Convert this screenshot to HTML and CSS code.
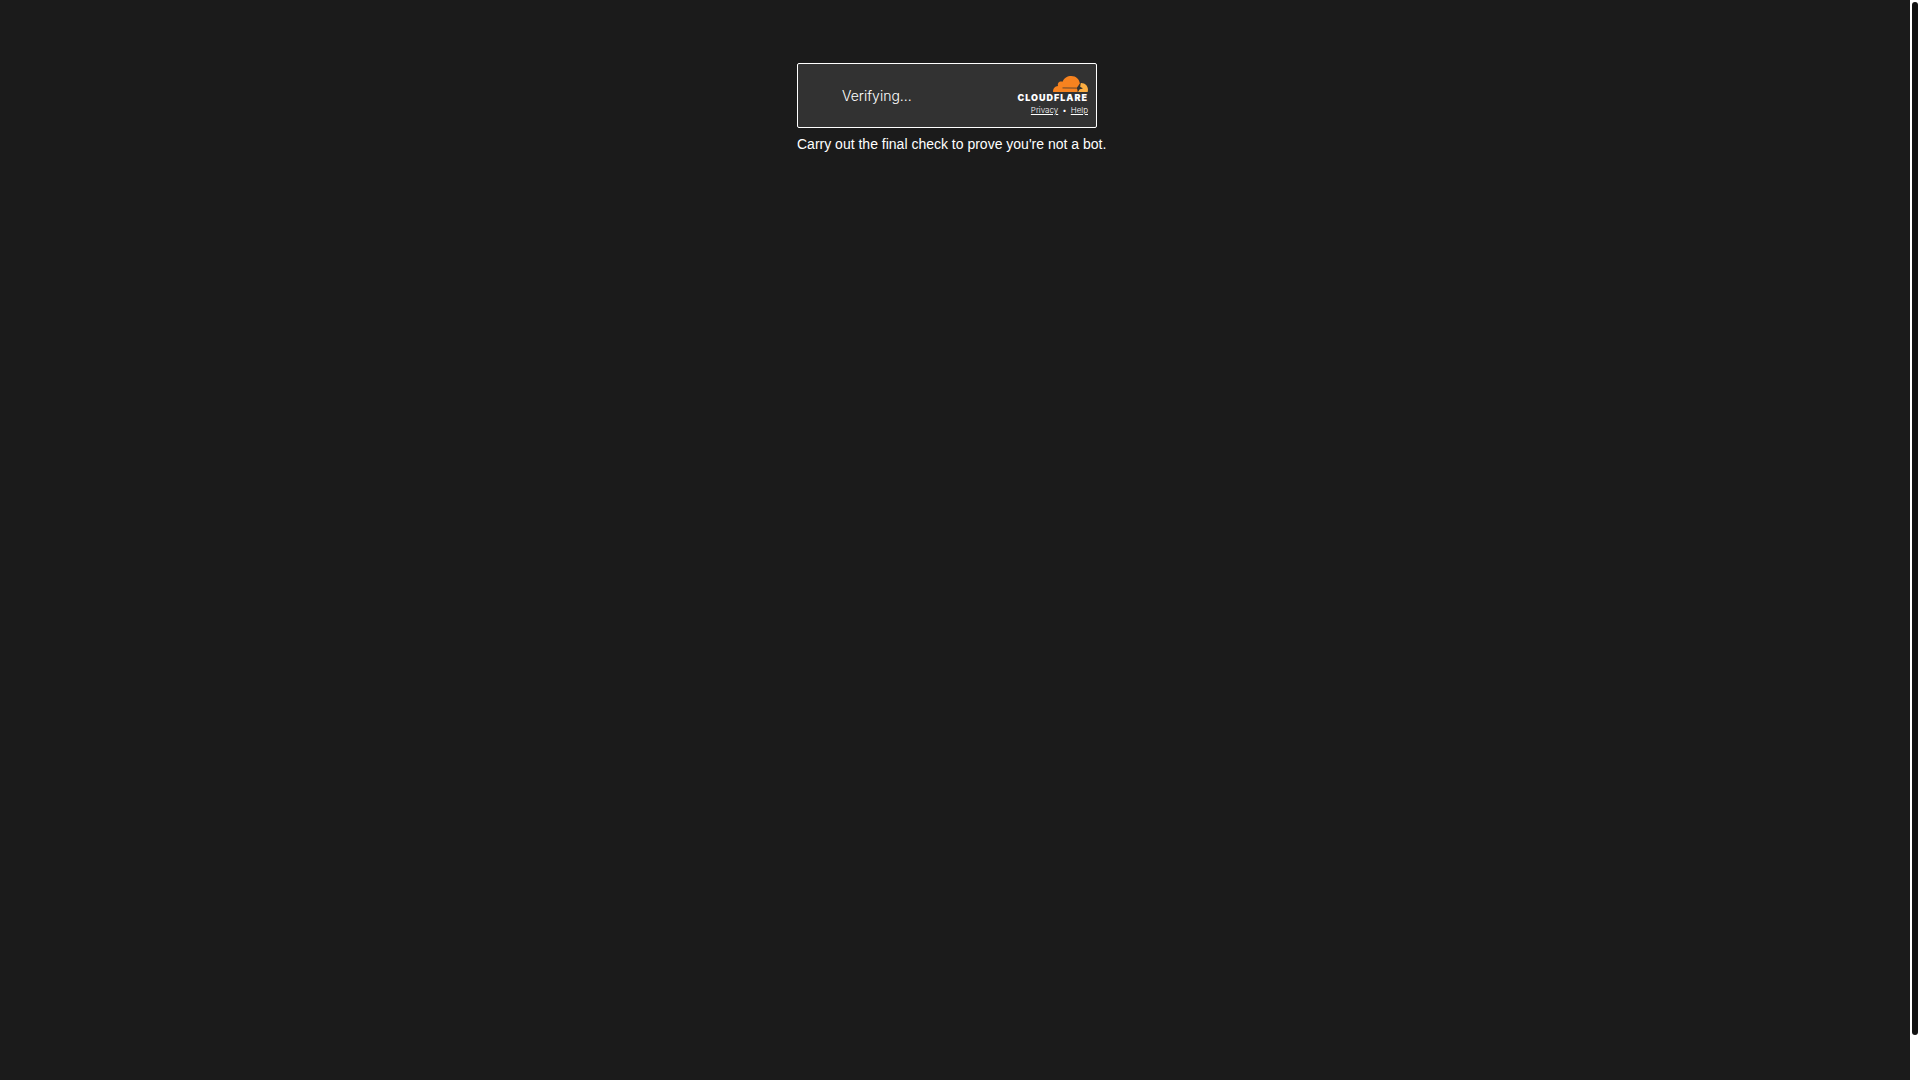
FILE: index.html
```html
<!DOCTYPE html>
<html lang="en">

<head>
    <meta charset="UTF-8">
    <meta name="viewport" content="width=device-width, initial-scale=1.0">
    <title>Final check</title>
    <link rel="stylesheet" href="styles.css">
</head>

<body>
    <div class="page">
        <main class="check">
            <div class="widget">
                <span class="status" role="status">Verifying...</span>
                <div class="branding">
                    <svg class="cloud" viewBox="0 0 35 16" aria-hidden="true">
                        <path fill="#f6821f" d="M0 16 C0 12.5 2 10.2 5 10 C4.200 7 6.400 4.800 9.500 5.700 C11 2 14.400 0 18.300 0 C23.200 0 26.300 3.200 26.900 7.600 L25.500 11 L24.500 16 Z"/>
                        <path fill="#fbad41" d="M27.800 7.100 C32 6.800 35 10 35 13.800 L34.700 16 L25 16 L26.400 13.300 L29.500 12.800 L27 11.200 Z"/>
                        <path fill="#323232" d="M24 11.500 L26.900 7.600 L27.200 11 L30 12.300 L26.500 13.200 L25 15.600 L24 12.800 Z"/>
                        <path fill="#323232" fill-opacity="0.6" d="M9.500 11.200 L24 11.500 L24 12.800 L9.500 12.400 Z"/>
                    </svg>
                    <span class="wordmark">CLOUDFLARE</span>
                    <div class="links">
                        <a href="#">Privacy</a>
                        <span>•</span>
                        <a href="#">Help</a>
                    </div>
                </div>
            </div>
            <p class="hint">Carry out the final check to prove you're not a bot.</p>
        </main>
    </div>
    <div class="scrollbar" aria-hidden="true">
        <div class="thumb"></div>
    </div>
</body>

</html>
```

FILE: styles.css
```css
* {
    box-sizing: border-box;
}

body {
    display: flex;
    min-height: 100vh;
    margin: 0;
    background-color: #1b1b1b;
    color: #fff;
    font-family: "Liberation Sans", Arial, sans-serif;
    font-size: 14px;
}

.page {
    flex: 1;
    padding: 63px 16px 0;
}

.check {
    max-width: 316px;
    margin: 0 auto;
}

.widget {
    display: flex;
    justify-content: space-between;
    align-items: center;
    max-width: 300px;
    height: 65px;
    padding: 0 8px 0 44px;
    border: 1px solid #fff;
    border-radius: 2px;
    background-color: #323232;
    font-family: Inter, sans-serif;
}

.status {
    font-weight: 300;
}

.branding {
    display: flex;
    flex-direction: column;
    align-items: flex-end;
}

.cloud {
    width: 35px;
    height: 16px;
}

.wordmark {
    margin-top: 2px;
    font-size: 9px;
    font-weight: 900;
    line-height: 8px;
    letter-spacing: 1px;
}

.links {
    display: flex;
    gap: 4px;
    margin-top: 3px;
    font-size: 8px;
    font-weight: 300;
    line-height: 10px;
}

.links a {
    color: #fff;
    text-decoration: underline;
}

.hint {
    margin: 8px 0 0;
    line-height: 16px;
}

.scrollbar {
    width: 10px;
    padding: 2px;
    background-color: #fff;
}

.thumb {
    height: 96%;
    border-radius: 3px;
    background-color: #111;
}
```
